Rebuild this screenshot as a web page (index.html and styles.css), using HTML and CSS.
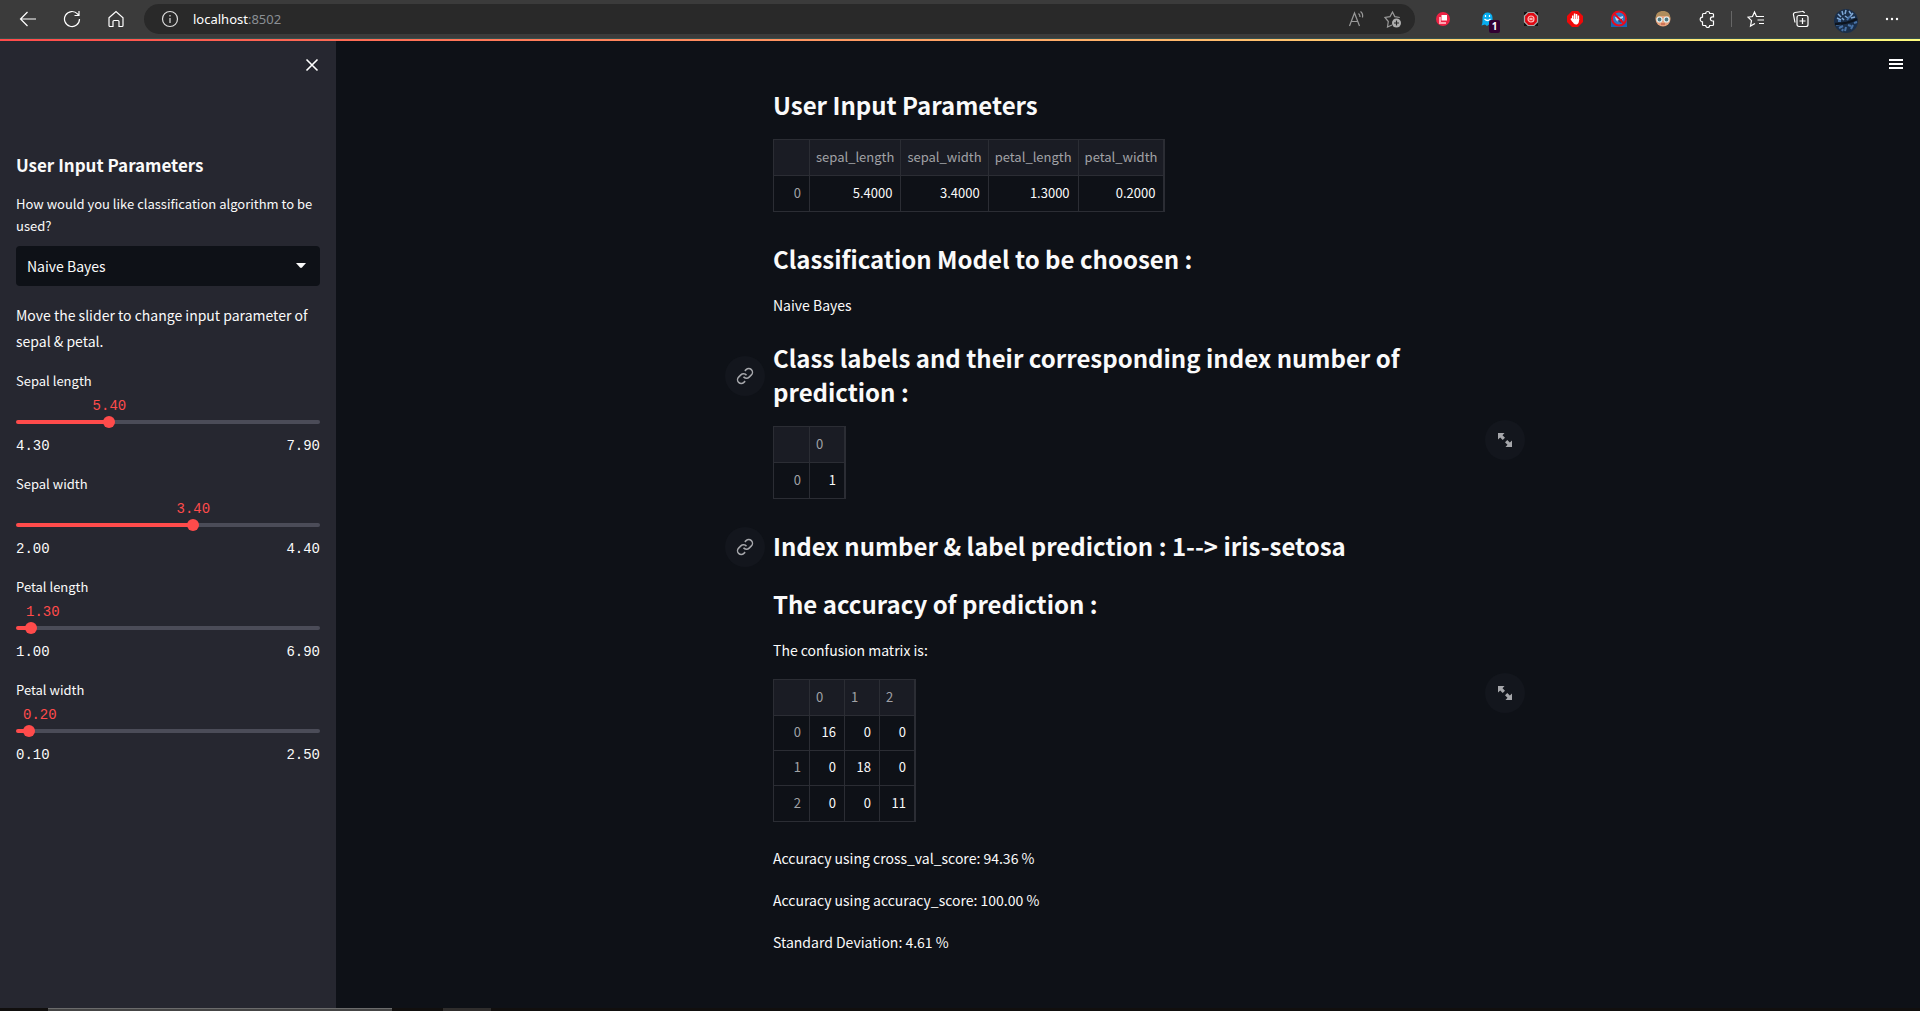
FILE: index.html
```html
<!DOCTYPE html>
<html lang="en">
<head>
<meta charset="utf-8">
<title>localhost:8502</title>
<link rel="stylesheet" href="styles.css">
</head>
<body>
<header class="browser">
  <nav class="nav">
    <button class="icon" aria-label="Back"><svg width="18" height="18" viewBox="0 0 18 18"><path d="M17 9H1.500M8.500 2L1.500 9l7 7"/></svg></button>
    <button class="icon" aria-label="Refresh"><svg width="18" height="18" viewBox="0 0 18 18"><path d="M16.500 9A7.500 7.500 0 1 1 14.500 3.900L16 5.500M16 1v4.500h-4.500"/></svg></button>
    <button class="icon" aria-label="Home"><svg width="18" height="18" viewBox="0 0 18 18"><path d="M2 7.800L9 1.500l7 6.300v7.700a1 1 0 0 1-1 1h-3v-5a1 1 0 0 0-1-1H7a1 1 0 0 0-1 1v5H3a1 1 0 0 1-1-1z"/></svg></button>
  </nav>
  <div class="address">
    <svg class="info" width="18" height="18" viewBox="0 0 18 18"><circle cx="9" cy="9" r="7.500"/><path d="M9 8v5M9 5v1.500"/></svg>
    <span class="url">localhost<span class="port">:8502</span></span>
    <button class="icon dim" aria-label="Read aloud"><svg width="18" height="18" viewBox="0 0 18 18"><path d="M1.500 16L6.500 3l5 13M3.300 11.500h6.500M10.500 3.500c1 .8 1.500 2 1.500 3.500M12.500 1.500c1.800 1.300 2.500 3.500 2 6"/></svg></button>
    <button class="icon dim" aria-label="Add to favourites"><svg width="18" height="18" viewBox="0 0 18 18"><path d="M8 15l-4.500 2 .8-5.500L1 7.500l5-.9L8.500 2l2.300 4.600 5 .9"/><circle class="fill" cx="12.500" cy="13" r="4.500"/><path class="cut" d="M12.500 10.500v5M10 13h5"/></svg></button>
  </div>
  <div class="tools">
    <button class="icon" aria-label="Screenshot"><svg width="18" height="18" viewBox="0 0 18 18"><g stroke="none"><circle cx="9" cy="9" r="7" fill="#ee2244"/><path fill="#ffa5b2" d="M5 7h2v5h5v2H5z"/><path fill="#fff" d="M7.500 5h5.500v5.500H7.500z"/></g></svg></button>
    <button class="icon ghost" aria-label="Tracker blocker"><svg width="18" height="18" viewBox="0 0 18 18"><path stroke="none" fill="#08aef0" d="M3.500 15.500c1-2 1-4 1-8a5 5 0 0 1 10 0c0 4 0 5 .5 7l-2 1-2-1-2 1.500-2-1.500z"/><path stroke="#fff" d="M7.500 5v2M11.500 5v2M6.500 9c2 2 4 2 6 0"/></svg><span class="badge">1</span></button>
    <button class="icon" aria-label="Stop ads"><svg width="18" height="18" viewBox="0 0 18 18"><path stroke="none" fill="#111" d="M2 2h14v14H2z"/><path fill="#e00812" stroke="#aaa" d="M6 2.500h6L15.500 6v6L12 15.500H6L2.500 12V6z"/><circle cx="9" cy="9" r="3" fill="#e33" stroke="#fbb"/><path stroke="#fff" d="M7.500 9h3"/></svg></button>
    <button class="icon" aria-label="Ad blocker"><svg width="18" height="18" viewBox="0 0 18 18"><path stroke="none" fill="#ef0909" d="M6 1h6l5 5v6l-5 5H6l-5-5V6z"/><path stroke="#fff" stroke-width="1.500" d="M6.700 5.500V11M8.600 3.500v6M10.500 4V10M12.400 5.500V10M5 8.500l2 3"/><path stroke="none" fill="#fff" d="M6 9h7.100c0 3-.6 5.500-3 5.500-2 0-3-1.500-4.100-4z"/></svg></button>
    <button class="icon" aria-label="Blocked site"><svg width="18" height="18" viewBox="0 0 18 18"><path stroke="none" fill="#1565b5" d="M1 10h16v7H1z"/><circle cx="9" cy="8.500" r="7" fill="#2e78c4" stroke="none"/><path stroke="none" fill="#b9d8f4" d="M5 7c2-1 4-1 5 0l3-1v4l-3 1-2 1-2-2z"/><path stroke="none" fill="#155090" d="M7 11l6-3-2 5z"/><circle cx="9" cy="8.500" r="7" stroke="#e80d1d" stroke-width="2"/><path stroke="#e80d1d" stroke-width="2" d="M4 3.500l10 10"/></svg></button>
    <button class="icon" aria-label="Profile helper"><svg width="18" height="18" viewBox="0 0 18 18"><g stroke="none"><circle cx="9" cy="9" r="7.500" fill="#e8a27c"/><path fill="#b08d5c" d="M1.500 9C1.500 3 5 1 9 1s7.500 2 7.500 8l-2-3H4z"/></g><circle cx="5.500" cy="9.500" r="2.500" fill="#4d7680" stroke="#dff2f5"/><circle cx="12.500" cy="9.500" r="2.500" fill="#4d7680" stroke="#dff2f5"/><path stroke="#b54" d="M7 14h4"/></svg></button>
    <button class="icon" aria-label="Extensions"><svg width="18" height="18" viewBox="0 0 18 18"><path d="M5.500 3.500h2.200a2 2 0 0 1 4 0h2.800a1 1 0 0 1 1 1v2.300h-1a2 2 0 0 0 0 4.200h1v3.500a1 1 0 0 1-1 1h-2.800a2 2 0 0 1-4 0H5.500a1 1 0 0 1-1-1v-2.700a2.300 2.300 0 0 1 0-4.600V4.500a1 1 0 0 1 1-1z"/></svg></button>
    <span class="divider"></span>
    <button class="icon" aria-label="Favourites"><svg width="18" height="18" viewBox="0 0 18 18"><path d="M11 6.500H9.500L7.500 2l-2 4.500-4.500.7 3.500 3.500-1 5.300 4.500-2.500M11 6.500h6M10.500 10H17M12 13.500h5"/></svg></button>
    <button class="icon" aria-label="Collections"><svg width="18" height="18" viewBox="0 0 18 18"><rect x="6" y="5.500" width="11" height="11" rx="2"/><path d="M11.500 8v6M8.500 11h6M4 12.500L2.500 5a2 2 0 0 1 1.500-2.500l7-1a2 2 0 0 1 2.500 1.500"/></svg></button>
    <button class="icon avatar" aria-label="Profile"><svg width="24" height="24" viewBox="0 0 24 24"><circle cx="12" cy="12" r="12" fill="#1b2f4a" stroke="none"/><path stroke="#7fa8d6" stroke-width="1.500" d="M4 5l3 3M8 2l1 4M12 1l-1 4M15 2l2 3M19 4l-3 4M21 8l-4 1M3 9l4 2M11 7l3 2M8 9l2 2"/><path stroke="#4772a6" stroke-width="2" d="M2 16l5-1M5 19l4-2M11 22l1-4M17 20l2-4M9 20l-1 2M14 16l3 1M20 14l3-1M13 11l3-4M4 12l3 0"/><path stroke="#0d141e" stroke-width="2.500" d="M1 15c8 0 14-1 22-5"/></svg></button>
    <button class="icon" aria-label="More"><svg width="18" height="18" viewBox="0 0 18 18"><g fill="#fff" stroke="none"><circle cx="4" cy="9" r="1.200"/><circle cx="9" cy="9" r="1.200"/><circle cx="14" cy="9" r="1.200"/></g></svg></button>
  </div>
</header>
<div class="decoration"></div>

<div class="app">
  <aside class="sidebar">
    <div class="sidebar-top">
      <button class="icon" aria-label="Close sidebar"><svg width="14" height="14" viewBox="0 0 14 14"><path stroke-width="1.600" d="M1.500 1.500l11 11M12.500 1.500l-11 11"/></svg></button>
    </div>
    <h2 class="sidebar-title">User Input Parameters</h2>
    <label class="label" for="algo">How would you like classification algorithm to be used?</label>
    <div class="select-box">
      <select id="algo" class="select"><option>Naive Bayes</option></select>
      <svg class="caret" width="10" height="6" viewBox="0 0 10 6"><path d="M0 0h10L6 4.500a1.500 1.500 0 0 1-2 0z"/></svg>
    </div>
    <p class="hint">Move the slider to change input parameter of sepal &amp; petal.</p>

    <div class="slider" style="--pos:30.600%;--value:25.200%">
      <label class="label" for="sl">Sepal length</label>
      <output class="value" for="sl">5.40</output>
      <div class="rail"><input id="sl" class="range" type="range" min="4.3" max="7.9" step="0.1" value="5.4"></div>
      <div class="ticks"><span>4.30</span><span>7.90</span></div>
    </div>
    <div class="slider" style="--pos:58.300%;--value:52.800%">
      <label class="label" for="sw">Sepal width</label>
      <output class="value" for="sw">3.40</output>
      <div class="rail"><input id="sw" class="range" type="range" min="2" max="4.4" step="0.1" value="3.4"></div>
      <div class="ticks"><span>2.00</span><span>4.40</span></div>
    </div>
    <div class="slider" style="--pos:5.100%;--value:3.300%">
      <label class="label" for="pl">Petal length</label>
      <output class="value" for="pl">1.30</output>
      <div class="rail"><input id="pl" class="range" type="range" min="1" max="6.9" step="0.1" value="1.3"></div>
      <div class="ticks"><span>1.00</span><span>6.90</span></div>
    </div>
    <div class="slider" style="--pos:4.200%;--value:2.300%">
      <label class="label" for="pw">Petal width</label>
      <output class="value" for="pw">0.20</output>
      <div class="rail"><input id="pw" class="range" type="range" min="0.1" max="2.5" step="0.1" value="0.2"></div>
      <div class="ticks"><span>0.10</span><span>2.50</span></div>
    </div>
  </aside>

  <main class="main">
    <div class="toolbar">
      <button class="icon" aria-label="Menu"><svg width="16" height="12" viewBox="0 0 16 12"><path stroke-width="2" d="M1 2h14M1 6h14M1 10h14"/></svg></button>
    </div>
    <div class="content">
      <h1 class="heading">User Input Parameters</h1>
      <div class="frame">
        <table class="grid">
          <thead><tr><th></th><th>sepal_length</th><th>sepal_width</th><th>petal_length</th><th>petal_width</th></tr></thead>
          <tbody><tr><th>0</th><td>5.4000</td><td>3.4000</td><td>1.3000</td><td>0.2000</td></tr></tbody>
        </table>
      </div>
      <h1 class="heading">Classification Model to be choosen :</h1>
      <p class="text">Naive Bayes</p>
      <h1 class="heading" id="labels"><a class="round anchor" href="#labels" aria-label="Link to section"><svg width="18" height="18" viewBox="0 0 24 24"><path stroke-width="2" d="M10 13a5 5 0 0 0 7.540.540l3-3a5 5 0 0 0-7.070-7.070l-1.720 1.710M14 11a5 5 0 0 0-7.540-.540l-3 3a5 5 0 0 0 7.070 7.070l1.710-1.710"/></svg></a>Class labels and their corresponding index number of prediction :</h1>
      <div class="frame">
        <table class="grid">
          <thead><tr><th></th><th>0</th></tr></thead>
          <tbody><tr><th>0</th><td>1</td></tr></tbody>
        </table>
        <button class="round expand" aria-label="View fullscreen"><svg width="16" height="16" viewBox="0 0 16 16"><path d="M1 1h6.500L5.500 3.200 8 5.700 5.700 8 3.200 5.500 1 7.500zM15 15H8.500l2-2.200L8 10.300 10.300 8l2.500 2.500L15 8.500z"/></svg></button>
      </div>
      <h1 class="heading" id="index"><a class="round anchor" href="#index" aria-label="Link to section"><svg width="18" height="18" viewBox="0 0 24 24"><path stroke-width="2" d="M10 13a5 5 0 0 0 7.540.540l3-3a5 5 0 0 0-7.070-7.070l-1.720 1.710M14 11a5 5 0 0 0-7.540-.540l-3 3a5 5 0 0 0 7.070 7.070l1.710-1.710"/></svg></a>Index number &amp; label prediction : 1--&gt; iris-setosa</h1>
      <h1 class="heading">The accuracy of prediction :</h1>
      <p class="text">The confusion matrix is:</p>
      <div class="frame">
        <table class="grid">
          <thead><tr><th></th><th>0</th><th>1</th><th>2</th></tr></thead>
          <tbody>
            <tr><th>0</th><td>16</td><td>0</td><td>0</td></tr>
            <tr><th>1</th><td>0</td><td>18</td><td>0</td></tr>
            <tr><th>2</th><td>0</td><td>0</td><td>11</td></tr>
          </tbody>
        </table>
        <button class="round expand" aria-label="View fullscreen"><svg width="16" height="16" viewBox="0 0 16 16"><path d="M1 1h6.500L5.500 3.200 8 5.700 5.700 8 3.200 5.500 1 7.500zM15 15H8.500l2-2.200L8 10.300 10.300 8l2.500 2.500L15 8.500z"/></svg></button>
      </div>
      <p class="text">Accuracy using cross_val_score: 94.36 %</p>
      <p class="text">Accuracy using accuracy_score: 100.00 %</p>
      <p class="text">Standard Deviation: 4.61 %</p>
    </div>
  </main>
</div>
<footer class="taskbar"><span class="task active"></span><span class="task"></span></footer>
</body>
</html>
```
FILE: styles.css
```css
* { box-sizing: border-box; }

body {
  margin: 0;
  min-height: 100vh;
  display: flex;
  flex-direction: column;
  background: #0e1117;
  color: #fafafa;
  font: 14px/26px "Noto Sans CJK SC", "Open Sans", sans-serif;
}

h1, h2, p { margin: 0; }

svg { display: block; fill: none; stroke: currentColor; stroke-width: 1.2; }

.icon {
  display: grid;
  place-items: center;
  flex: none;
  width: 20px;
  height: 20px;
  padding: 0;
  border: 0;
  background: none;
  color: #fff;
}

/* Browser chrome */
.browser {
  display: flex;
  align-items: center;
  height: 38px;
  background: #3b3b3b;
}
.nav { display: flex; gap: 24px; padding: 0 18px; }
.address {
  flex: 1;
  display: flex;
  align-items: center;
  gap: 16px;
  height: 30px;
  padding: 0 12px 0 17px;
  border-radius: 15px;
  background: #292929;
}
.info { flex: none; color: #ddd; }
.url { flex: 1; margin-left: -2px; font: 13px/20px "Noto Sans", sans-serif; color: #fff; }
.port { color: #8a8f94; }
.dim { color: #9a9a9a; }
.dim .fill { fill: #b0b0b0; stroke: none; }
.dim .cut { stroke: #292929; }
.tools { display: flex; align-items: center; gap: 24px; padding: 0 18px; }
.tools .avatar { width: 24px; }
.divider { width: 1px; height: 16px; margin: 0 -10px; background: #666; }
.ghost { position: relative; }
.badge {
  position: absolute;
  left: 12px;
  top: 11px;
  width: 11px;
  height: 13px;
  border-radius: 2px;
  background: #330033;
  font: bold 10px/13px "Open Sans", sans-serif;
}
.decoration { height: 3px; border-top: 1px solid #35504c; background: linear-gradient(90deg, #ff4b4b, #fffd80); }

/* Page */
.app { flex: 1; display: flex; }

.sidebar {
  flex: none;
  width: 336px;
  padding: 16px;
  background: #262730;
}
.sidebar-top { display: flex; justify-content: flex-end; height: 96px; }
.sidebar-top .icon { width: 16px; height: 16px; }
.sidebar-title { font-size: 17px; line-height: 24px; font-weight: 700; }
.label { display: block; font-size: 13px; line-height: 22px; }
.sidebar-title + .label { margin-top: 16px; }
.select-box { display: grid; align-items: center; margin-top: 9px; }
.select {
  grid-area: 1 / 1;
  width: 100%;
  height: 40px;
  padding: 0 11px;
  border: 0;
  border-radius: 4px;
  appearance: none;
  background: #0e1117;
  color: inherit;
  font: inherit;
}
.caret { grid-area: 1 / 1; justify-self: end; margin-right: 14px; fill: #fafafa; stroke: none; }
.hint { margin-top: 16px; }

.slider { height: 87px; margin-top: 16px; }
.value { display: block; margin: 4px 0 0 var(--value); color: #ff4b4b; font: 14px/20px "Liberation Mono", monospace; }
.rail {
  display: grid;
  align-items: center;
  height: 4px;
  margin-top: 4px;
  border-radius: 2px;
  background: linear-gradient(90deg, #ff4b4b var(--pos), #4b4c58 var(--pos));
}
.range { appearance: none; width: calc(100% + 12px); height: 12px; margin: -4px -6px; background: none; }
.range::-webkit-slider-thumb { appearance: none; width: 12px; height: 12px; border-radius: 50%; background: #ff4b4b; }
.ticks { display: flex; justify-content: space-between; margin-top: 11px; font: 14px/22px "Liberation Mono", monospace; }

.main { flex: 1; padding-right: 6px; }
.toolbar { display: flex; justify-content: flex-end; height: 47px; padding: 13px 8px 0 0; }
.content {
  display: flex;
  flex-direction: column;
  gap: 16px;
  width: 100%;
  max-width: 704px;
  margin: 0 auto;
}
.heading { position: relative; margin-top: 7px; padding-bottom: 1px; font-size: 24px; line-height: 34px; font-weight: 700; }
.heading:first-child { margin-top: 0; }
.heading + .text { margin-top: -1px; }
.round {
  display: grid;
  place-items: center;
  width: 40px;
  height: 40px;
  padding: 0;
  border: 0;
  border-radius: 50%;
  background: #13161d;
  color: #a6a7ab;
}
.anchor { position: absolute; right: 100%; top: 50%; margin: -20px 8px 0 0; }
.frame { position: relative; margin-bottom: 7px; }
.expand { position: absolute; left: 100%; top: -6px; margin-left: 8px; }
.expand svg { fill: currentColor; stroke: none; }

/* Data grids */
.grid {
  border: 1px solid #2b2d34;
  border-spacing: 0;
  font-size: 13px;
  line-height: 18px;
}
.grid th, .grid td {
  height: 35px;
  min-width: 35px;
  padding: 0 8px 2px;
  border: solid #2b2d34;
  border-width: 0 1px 1px 0;
  text-align: right;
}
.grid th { color: #a1a2a6; font-weight: 400; }
.grid th:first-child { min-width: 36px; }
.grid thead th { height: 36px; padding: 0 6px 1px; background: #1a1c24; text-align: left; }
.grid tbody tr:last-child > * { border-bottom: 0; }

.taskbar { display: flex; gap: 51px; height: 3px; padding-left: 48px; background: #110f0e; }
.task { width: 48px; background: #2f2d2c; }
.task.active { width: 344px; border-top: 1px solid #6b6b6b; background: #444; }
```
